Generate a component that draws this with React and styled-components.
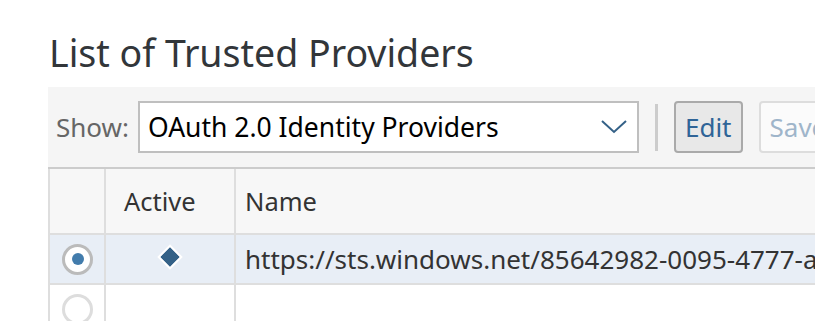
import React from "react";
import styled, { createGlobalStyle } from "styled-components";

const GlobalStyle = createGlobalStyle`
  body {
    margin: 0;
    background: #fff;
    font-family: "Noto Sans", "Open Sans", Arial, sans-serif;
    color: #333;
    overflow: hidden;
  }
`;

const Page = styled.div`
  padding: 29px 0 0 48px;
`;

const Title = styled.h1`
  margin: 0 0 11px 1px;
  font-size: 37.5px;
  font-weight: 400;
  line-height: 47px;
  color: #32363a;
  white-space: nowrap;
`;

const Toolbar = styled.div`
  display: flex;
  align-items: center;
  height: 80px;
  padding-left: 8px;
  background: #f5f5f5;
  border-bottom: 2px solid #cccccc;
  overflow: hidden;
`;

const Label = styled.span`
  font-size: 26px;
  color: #666;
  margin-right: 9px;
  flex-shrink: 0;
`;

const Select = styled.div`
  box-sizing: border-box;
  flex-shrink: 0;
  width: 501px;
  height: 52px;
  display: flex;
  align-items: center;
  justify-content: space-between;
  padding: 0 10px 0 8px;
  background: #fff;
  border: 2px solid #bfbfbf;
  font-size: 26.5px;
  color: #000;
`;

const Separator = styled.div`
  flex-shrink: 0;
  width: 3px;
  height: 47px;
  margin: 0 16px 0 16px;
  background: #cccccc;
`;

const Button = styled.button`
  box-sizing: border-box;
  flex-shrink: 0;
  height: 52px;
  padding: 0 9px;
  margin-right: 16px;
  font-family: inherit;
  font-size: 26px;
  border-radius: 4px;
  border: 2px solid ${p => (p.disabled ? "#dddddd" : "#aaaaaa")};
  background: ${p => (p.disabled ? "#fbfbfb" : "#e8e8e8")};
  color: ${p => (p.disabled ? "#9fb5ca" : "#2f6497")};
`;

const Row = styled.div`
  box-sizing: border-box;
  display: grid;
  grid-template-columns: 56px 130px 1fr;
  height: ${p => p.height}px;
  background: ${p => p.bg};
  border-bottom: 2px solid #dedede;
`;

const Cell = styled.div`
  display: flex;
  align-items: center;
  justify-content: ${p => (p.center ? "center" : "flex-start")};
  padding-left: ${p => p.pad || 0}px;
  border-left: 2px solid #dedede;
  font-size: 25.5px;
  color: #333;
  white-space: nowrap;
  overflow: hidden;
`;

const Url = styled.span`
  font-size: 26px;
`;

const Radio = styled.span`
  box-sizing: border-box;
  width: 31px;
  height: 31px;
  border-radius: 50%;
  border: 3px solid ${p => (p.checked ? "#bbbbbb" : "#dddddd")};
  background: #fff;
  display: flex;
  align-items: center;
  justify-content: center;
  margin-left: 12px;
  &::after {
    content: "";
    display: ${p => (p.checked ? "block" : "none")};
    width: 12px;
    height: 12px;
    border-radius: 50%;
    background: #427cac;
  }
`;

const Diamond = styled.span`
  width: 14px;
  height: 14px;
  background: #346187;
  outline: 2px solid #fff;
  transform: rotate(45deg);
  margin-top: -4px;
`;

function Chevron() {
  return (
    <svg width="26" height="14" viewBox="0 0 26 14">
      <path d="M1 1 L13 12 L25 1" fill="none" stroke="#346187" strokeWidth="2" />
    </svg>
  );
}

export default function App() {
  return (
    <Page>
      <GlobalStyle />
      <Title>List of Trusted Providers</Title>
      <Toolbar>
        <Label>Show:</Label>
        <Select>
          <span>OAuth 2.0 Identity Providers</span>
          <Chevron />
        </Select>
        <Separator />
        <Button>Edit</Button>
        <Button disabled>Save</Button>
      </Toolbar>
      <Row height={66} bg="#f7f7f7">
        <Cell />
        <Cell pad={18}>Active</Cell>
        <Cell pad={9}>Name</Cell>
      </Row>
      <Row height={50} bg="#e8eef6">
        <Cell>
          <Radio checked />
        </Cell>
        <Cell center>
          <Diamond />
        </Cell>
        <Cell pad={9}>
          <Url>https://sts.windows.net/85642982-0095-4777-a</Url>
        </Cell>
      </Row>
      <Row height={50} bg="#fff">
        <Cell>
          <Radio />
        </Cell>
        <Cell center />
        <Cell />
      </Row>
    </Page>
  );
}
